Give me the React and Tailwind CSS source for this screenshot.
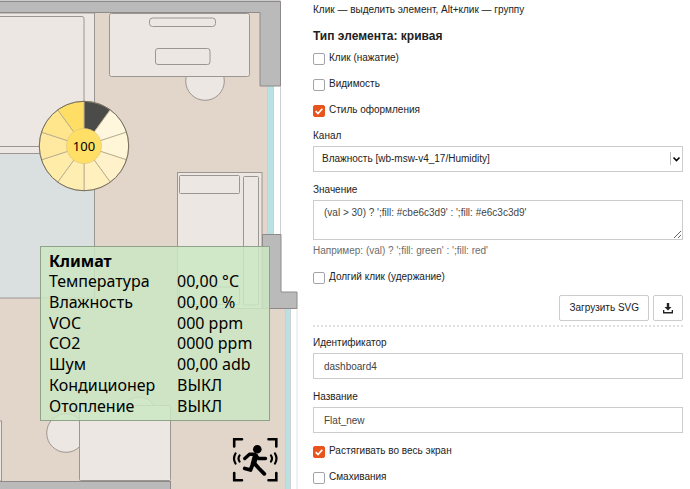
import { useState } from "react";

const SECTOR_COLORS = [
  "#4b4b4a",
  "#fff7dd",
  "#fff6d8",
  "#fff2ca",
  "#fff0be",
  "#ffeeb2",
  "#ffeca8",
  "#ffe9a0",
  "#ffe58c",
  "#ffde66",
];

const READINGS = [
  ["Температура", "00,00 °C"],
  ["Влажность", "00,00 %"],
  ["VOC", "000 ppm"],
  ["CO2", "0000 ppm"],
  ["Шум", "00,00 adb"],
  ["Кондиционер", "ВЫКЛ"],
  ["Отопление", "ВЫКЛ"],
];

function sectorPath(index) {
  const point = (r, a) => `${84 + r * Math.sin(a)} ${146 - r * Math.cos(a)}`;
  const a = (index * Math.PI) / 5;
  const b = ((index + 1) * Math.PI) / 5;
  return `M84 146L${point(44.7, a)}A44.7 44.7 0 0 1 ${point(44.7, b)}Z`;
}

function FloorPlan() {
  return (
    <svg width="298" height="489" viewBox="0 0 298 489" className="block" aria-label="План квартиры">
      <rect width="298" height="489" fill="#fff" />
      <path d="M0 0H268V300H286V489H0Z" fill="#e2d5c9" />
      {/* windows */}
      <g>
        <rect x="268" y="86" width="5" height="149" fill="#b9e0e2" />
        <path d="M267.5 86V235M273.5 86V235M280.5 86V235" stroke="#cfcfcf" />
        <rect x="286" y="308" width="4.500" height="181" fill="#b9e0e2" />
        <path d="M285.500 308V489M290.500 308V489" stroke="#cfcfcf" />
        <path d="M297 308V489" stroke="#e2e2e2" />
      </g>
      {/* furniture */}
      <g stroke="#9c9693" fill="#ece7e3">
        <rect x="-5" y="153.500" width="99.500" height="144.500" fill="#dadfe0" />
        <rect x="-5" y="13" width="99.500" height="140.500" />
        <rect x="-5" y="16.500" width="89" height="130" rx="2" />
        <circle cx="205" cy="81" r="19.300" />
        <rect x="109.500" y="13.500" width="140" height="63" rx="2" />
        <rect x="149.500" y="18" width="66" height="8.500" rx="3" />
        <rect x="155.500" y="48.500" width="54.500" height="16" rx="2.500" />
        <rect x="177.500" y="172.500" width="84.500" height="136" />
        <rect x="179.500" y="175.500" width="60" height="18" rx="1" />
        <rect x="179.500" y="287" width="60" height="17.500" rx="1" />
        <rect x="243.500" y="176.500" width="15" height="128.500" rx="1" />
        <circle cx="66" cy="433" r="19.300" />
        <circle cx="139" cy="414" r="17" />
        <rect x="79.500" y="405.500" width="91" height="75" rx="1" />
        <rect x="-5" y="421" width="6.500" height="60" />
      </g>
      {/* walls */}
      <g fill="#bababa" stroke="#8e8a8a">
        <rect x="-1" y="-1" width="281.500" height="3" fill="#ccc" stroke="none" />
        <path d="M-1 1.500H280.500V86H260V12.500H-1Z" />
        <path d="M262.500 234.500H281V292H297V308.500H262.500Z" />
        <rect x="-5" y="481.500" width="175.500" height="12" />
      </g>
      {/* brightness dial */}
      <g>
        {SECTOR_COLORS.map((color, i) => (
          <path key={i} d={sectorPath(i)} fill={color} stroke="#b3a78c" strokeWidth="0.8" />
        ))}
        <circle cx="84" cy="146" r="44.700" fill="none" stroke="#77705f" />
        <circle cx="84" cy="146" r="17.500" fill="#ffdf66" stroke="#d9c27a" strokeWidth="0.6" />
        <text x="84" y="151" textAnchor="middle" fill="#000" className="font-['Noto_Sans',sans-serif] text-[13px]">
          100
        </text>
      </g>
      {/* motion sensor */}
      <g fill="none" stroke="#000" strokeWidth="2.600">
        <path d="M234.200 446.500V439.200H242M268.500 439.200H276.300V446.500M276.300 473V480.300H268.500M242 480.300H234.200V473" strokeLinecap="round" />
        <path d="M235.500 453.500Q232.500 458.500 235.500 463.500M239.500 455.500Q237.500 458.500 239.500 461.500M275 453.500Q278 458.500 275 463.500M271 455.500Q273 458.500 271 461.500" strokeWidth="2.200" strokeLinecap="round" />
        <circle cx="257.300" cy="449.300" r="4.300" fill="#000" stroke="none" />
        <path d="M244.800 458.500L249.500 454.300H254.500L258.500 458.500H265.500" strokeWidth="3.400" strokeLinecap="round" strokeLinejoin="round" />
        <path d="M255.500 456L253.500 463.500" strokeWidth="5.400" strokeLinecap="round" />
        <path d="M252.800 464L250.500 470L244.800 468.500M254.500 463.500L259 468.500L264.300 473.800" strokeWidth="3.800" strokeLinecap="round" strokeLinejoin="round" />
      </g>
    </svg>
  );
}

function ClimatePanel() {
  return (
    <section className="absolute left-10 top-[246px] w-[230px] border border-[#8ea387] bg-[#cbe6c3d9] pb-1 pl-2 pt-1 font-['Noto_Sans',sans-serif] text-[16px] leading-5 text-black">
      <h2 className="font-bold">Климат</h2>
      <table className="h-[145px] w-full border-separate border-spacing-0 text-left">
        <tbody>
          {READINGS.map(([name, value]) => (
            <tr key={name}>
              <th scope="row" className="w-32 p-0 font-normal">{name}</th>
              <td className="p-0">{value}</td>
            </tr>
          ))}
        </tbody>
      </table>
    </section>
  );
}

function Check({ label, initial = false }) {
  const [checked, setChecked] = useState(initial);
  return (
    <label className="flex items-start gap-1">
      <span className="relative mt-[3px] h-3 w-3 shrink-0">
        <input
          type="checkbox"
          checked={checked}
          onChange={(e) => setChecked(e.target.checked)}
          className="block h-3 w-3 appearance-none rounded-[2px] border border-[#a3a3ac] bg-white checked:border-[#e9541d] checked:bg-[#e9541d]"
        />
        {checked && (
          <svg viewBox="0 0 12 12" className="pointer-events-none absolute inset-0 h-3 w-3" fill="none" stroke="#fff" strokeWidth="1.7">
            <path d="M2.700 6.200L5 8.500L9.300 3.700" />
          </svg>
        )}
      </span>
      {label}
    </label>
  );
}

function TextField({ id, label, value }) {
  return (
    <div className="flex flex-col gap-0.5">
      <label htmlFor={id}>{label}</label>
      <input id={id} defaultValue={value} className="h-[26px] w-full border border-[#ccc] bg-white px-2.5 text-[#444]" />
    </div>
  );
}

export default function App() {
  return (
    <div className="flex min-h-screen bg-white">
      <div className="relative shrink-0">
        <FloorPlan />
        <ClimatePanel />
      </div>
      <form className="flex min-w-0 flex-1 flex-col gap-2.5 pl-[15px] pr-[7px] pt-0.5 font-['Liberation_Sans',Arial,sans-serif] text-[10px] leading-4 text-[#222]">
        <p>Клик — выделить элемент, Alt+клик — группу</p>
        <div className="flex flex-col gap-1.5">
          <h2 className="text-[12px] leading-4 font-bold">Тип элемента: кривая</h2>
          <Check label="Клик (нажатие)" />
        </div>
        <Check label="Видимость" />
        <Check label="Стиль оформления" initial />
        <div className="flex flex-col gap-0.5">
          <label htmlFor="channel">Канал</label>
          <div className="relative">
            <select id="channel" className="block h-[26px] w-full appearance-none border border-[#ccc] bg-white px-2">
              <option>Влажность [wb-msw-v4_17/Humidity]</option>
            </select>
            <svg viewBox="0 0 14 14" className="pointer-events-none absolute right-0 top-1.5 h-3.5 w-3.5" fill="none">
              <path d="M1.500 0V13" stroke="#bbb" />
              <path d="M4.500 5.500L7.500 8.500L10.500 5.500" stroke="#000" strokeWidth="1.600" />
            </svg>
          </div>
        </div>
        <div className="flex flex-col gap-0.5">
          <label htmlFor="value">Значение</label>
          <textarea id="value" defaultValue="(val > 30) ? ';fill: #cbe6c3d9' : ';fill: #e6c3c3d9'" className="block h-10 w-full resize-y border border-[#ccc] bg-white px-2.5 py-1 text-[#444]" />
          <p className="pt-px text-[#6c6c6c]">Например: (val) ? ';fill: green' : ';fill: red'</p>
        </div>
        <Check label="Долгий клик (удержание)" />
        <div className="flex justify-end gap-1 border-b-2 border-dotted border-[#e0e0e0] pb-1">
          <button type="button" className="h-[26px] rounded-[2px] border border-[#ccc] px-[9px]">Загрузить SVG</button>
          <button type="button" aria-label="Скачать" className="flex h-[26px] w-[30px] items-center justify-center rounded-[2px] border border-[#ccc]">
            <svg viewBox="0 0 10 11" className="h-[11px] w-2.5" fill="#222">
              <path d="M3.800 0H6.200V4H8.500L5 7.500L1.500 4H3.800ZM0 7H1.300V9H8.700V7H10V10.500H0Z" />
            </svg>
          </button>
        </div>
        <div className="-mt-0.5 flex flex-col gap-2.5">
          <TextField id="identifier" label="Идентификатор" value="dashboard4" />
          <TextField id="title" label="Название" value="Flat_new" />
          <Check label="Растягивать во весь экран" initial />
          <Check label="Смахивания" />
        </div>
      </form>
    </div>
  );
}
